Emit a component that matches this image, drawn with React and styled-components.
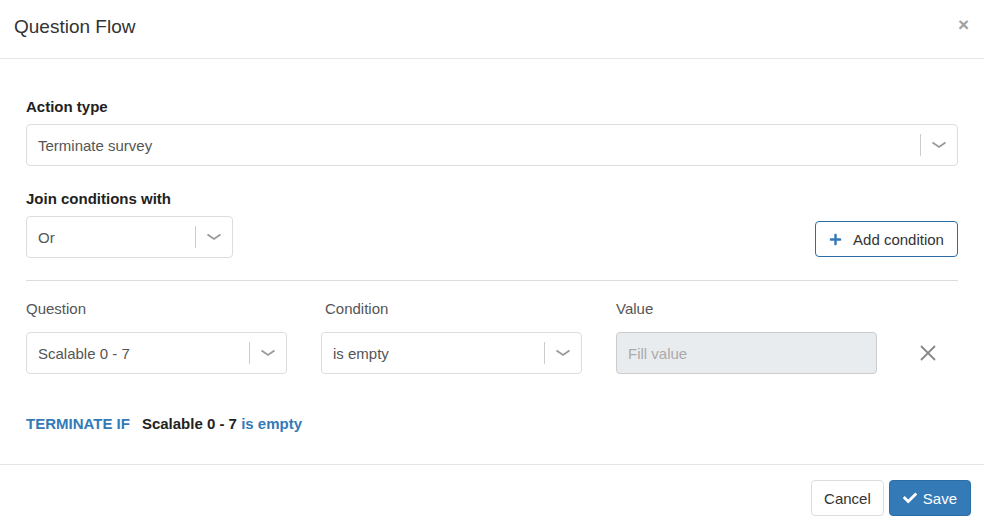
import React from "react";
import styled, { createGlobalStyle } from "styled-components";
import { FaCheck, FaPlus } from "react-icons/fa";

const GlobalStyle = createGlobalStyle`
  html, body {
    margin: 0;
    padding: 0;
    background: #fff;
  }
  body {
    font-family: "Liberation Sans", Arial, sans-serif;
    font-size: 15px;
    color: #333;
  }
  * {
    box-sizing: border-box;
  }
`;

const Modal = styled.div`
  width: 984px;
  height: 530px;
  display: flex;
  flex-direction: column;
  background: #fff;
`;

const Header = styled.div`
  height: 59px;
  display: flex;
  align-items: center;
  justify-content: space-between;
  padding: 0 15px 4px 14px;
  border-bottom: 1px solid #e5e5e5;
`;

const Title = styled.h4`
  margin: 0;
  font-size: 19px;
  font-weight: normal;
  color: #333;
`;

const Close = styled.span`
  font-size: 19px;
  font-weight: bold;
  color: #a0a0a0;
  line-height: 1;
  margin-top: -6px;
`;

const Body = styled.div`
  flex: 1;
  padding: 38px 26px 0 26px;
  display: flex;
  flex-direction: column;
`;

const FieldLabel = styled.div`
  font-weight: bold;
  line-height: 20px;
  margin-bottom: 7px;
  color: #222;
  margin-top: ${p => p.$top || 0}px;
`;

const ColLabel = styled.div`
  line-height: 20px;
  margin-bottom: 13px;
  color: #555;
  padding-left: ${p => p.$indent || 0}px;
`;

const Select = styled.div`
  height: 42px;
  width: ${p => (p.$width ? `${p.$width}px` : "100%")};
  border: 1px solid #ddd;
  border-radius: 4px;
  display: flex;
  align-items: center;
  padding-left: 11px;
  color: #555;
  background: #fff;
`;

const SelectValue = styled.span`
  flex: 1;
`;

const Separator = styled.span`
  width: 1px;
  height: 22px;
  background: #ccc;
`;

const Chevron = styled.span`
  width: 36px;
  display: flex;
  justify-content: center;
  color: #999;
`;

const Row = styled.div`
  display: flex;
  justify-content: space-between;
  align-items: flex-end;
`;

const AddButton = styled.button`
  height: 36px;
  width: 143px;
  margin-bottom: 1px;
  border: 1px solid #2e6da4;
  border-radius: 4px;
  background: #fff;
  font-family: inherit;
  font-size: 15px;
  color: #333;
  display: flex;
  align-items: center;
  justify-content: center;
  gap: 11px;
  padding: 0;

  svg {
    color: #337ab7;
  }
`;

const Rule = styled.hr`
  margin: 22px 0 18px 0;
  border: 0;
  border-top: 1px solid #ddd;
`;

const ConditionRow = styled.div`
  display: grid;
  grid-template-columns: 261px 261px 261px 1fr;
  column-gap: 34px;
  align-items: end;
`;

const Column = styled.div`
  display: flex;
  flex-direction: column;
`;

const ValueInput = styled.div`
  height: 42px;
  border: 1px solid #ccc;
  border-radius: 4px;
  background: #e9ecef;
  color: #aaa;
  display: flex;
  align-items: center;
  padding-left: 11px;
`;

const Remove = styled.span`
  height: 42px;
  display: flex;
  align-items: center;
  padding-left: 8px;
  color: #888;
`;

const Summary = styled.div`
  margin-top: 40px;
  line-height: 20px;
  font-weight: bold;
  color: #222;
`;

const Keyword = styled.span`
  color: #337ab7;
  margin-right: ${p => p.$gap || 0}px;
`;

const Footer = styled.div`
  height: 66px;
  border-top: 1px solid #e5e5e5;
  display: flex;
  justify-content: flex-end;
  align-items: flex-start;
  gap: 5px;
  padding: 15px 13px 0 0;
`;

const Button = styled.button`
  height: 36px;
  padding: 0 ${p => (p.$primary ? 13 : 12)}px;
  border-radius: 4px;
  font-family: inherit;
  font-size: 15px;
  display: flex;
  align-items: center;
  gap: 6px;
  border: 1px solid ${p => (p.$primary ? "#2e6da4" : "#ddd")};
  background: ${p => (p.$primary ? "#337ab7" : "#fff")};
  color: ${p => (p.$primary ? "#fff" : "#333")};
`;

const ChevronIcon = () => (
  <svg width="16" height="10" viewBox="0 0 16 10">
    <path d="M1.5 2.5 L8 7 L14.5 2.5" fill="none" stroke="currentColor" strokeWidth="1.8" />
  </svg>
);

const Dropdown = ({ value, width }) => (
  <Select $width={width}>
    <SelectValue>{value}</SelectValue>
    <Separator />
    <Chevron>
      <ChevronIcon />
    </Chevron>
  </Select>
);

const CrossIcon = () => (
  <svg width="18" height="18" viewBox="0 0 18 18">
    <path d="M2 2 L16 16 M16 2 L2 16" stroke="currentColor" strokeWidth="1.8" />
  </svg>
);

export default function App() {
  return (
    <>
      <GlobalStyle />
      <Modal>
        <Header>
          <Title>Question Flow</Title>
          <Close>×</Close>
        </Header>
        <Body>
          <FieldLabel>Action type</FieldLabel>
          <Dropdown value="Terminate survey" />

          <FieldLabel $top={23}>Join conditions with</FieldLabel>
          <Row>
            <Dropdown value="Or" width={207} />
            <AddButton>
              <FaPlus size={13} />
              Add condition
            </AddButton>
          </Row>

          <Rule />

          <ConditionRow>
            <Column>
              <ColLabel>Question</ColLabel>
              <Dropdown value="Scalable 0 - 7" />
            </Column>
            <Column>
              <ColLabel $indent={4}>Condition</ColLabel>
              <Dropdown value="is empty" />
            </Column>
            <Column>
              <ColLabel>Value</ColLabel>
              <ValueInput>Fill value</ValueInput>
            </Column>
            <Remove>
              <CrossIcon />
            </Remove>
          </ConditionRow>

          <Summary>
            <Keyword $gap={12}>TERMINATE IF</Keyword>
            Scalable 0 - 7 <Keyword>is empty</Keyword>
          </Summary>
        </Body>
        <Footer>
          <Button>Cancel</Button>
          <Button $primary>
            <FaCheck size={14} />
            Save
          </Button>
        </Footer>
      </Modal>
    </>
  );
}
